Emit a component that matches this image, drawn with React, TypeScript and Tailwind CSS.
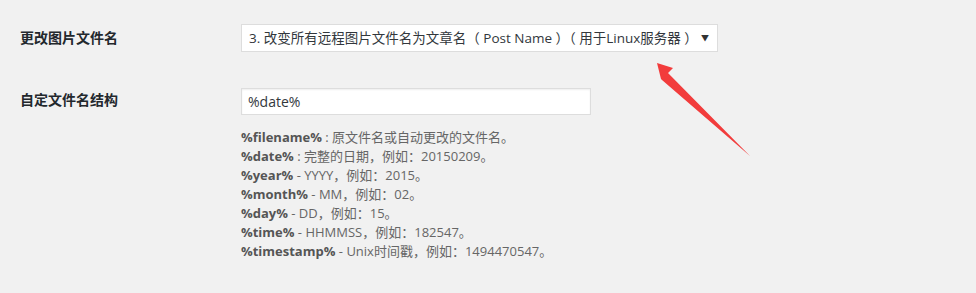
import React from "react";

const font = { fontFamily: '"Open Sans", "Noto Sans CJK SC", sans-serif' };

const tags: [string, string, string][] = [
  ["%filename%", " : ", "原文件名或自动更改的文件名。"],
  ["%date%", " : ", "完整的日期，例如：20150209。"],
  ["%year%", " - ", "YYYY，例如：2015。"],
  ["%month%", " - ", "MM，例如：02。"],
  ["%day%", " - ", "DD，例如：15。"],
  ["%time%", " - ", "HHMMSS，例如：182547。"],
  ["%timestamp%", " - ", "Unix时间戳，例如：1494470547。"],
];

export default function App() {
  return (
    <div className="relative h-[293px] w-[976px] overflow-hidden bg-[#f1f1f1] text-[#23282d]" style={font}>
      <div className="flex pt-6">
        <div className="w-[241px] pl-5 pt-[4px] text-[14px] font-bold leading-[20px]">更改图片文件名</div>
        <div className="flex h-[28px] w-[477px] items-center justify-between border border-[#dddddd] bg-white pl-[7px] pr-[8px] text-[13.5px] text-[#32373c]">
          <span className="whitespace-nowrap">3. 改变所有远程图片文件名为文章名（ Post Name ）（ 用于Linux服务器 ）</span>
          <span className="text-[8px] text-[#333]">▼</span>
        </div>
      </div>

      <div className="mt-[36px] flex">
        <div className="w-[241px] pl-5 pt-[2px] text-[14px] font-bold leading-[20px]">自定文件名结构</div>
        <div>
          <div className="flex h-[27px] w-[350px] items-center border border-[#dddddd] bg-white pl-[6px] text-[14px] text-[#32373c] shadow-[inset_0_1px_2px_rgba(0,0,0,0.07)]">
            %date%
          </div>
          <div className="mt-[13px] text-[13px] leading-[19px] text-[#666666]">
            {tags.map(([tag, sep, rest]) => (
              <div key={tag} className="whitespace-nowrap">
                <span className="font-bold text-[#555555]">{tag}</span>
                {sep}
                {rest}
              </div>
            ))}
          </div>
        </div>
      </div>

      <svg className="absolute left-0 top-0" width="976" height="293" viewBox="0 0 976 293">
        <polygon points="657,63 673,68 668,73 750,156 662,80 661,79" fill="#f23c3c" />
      </svg>
    </div>
  );
}
